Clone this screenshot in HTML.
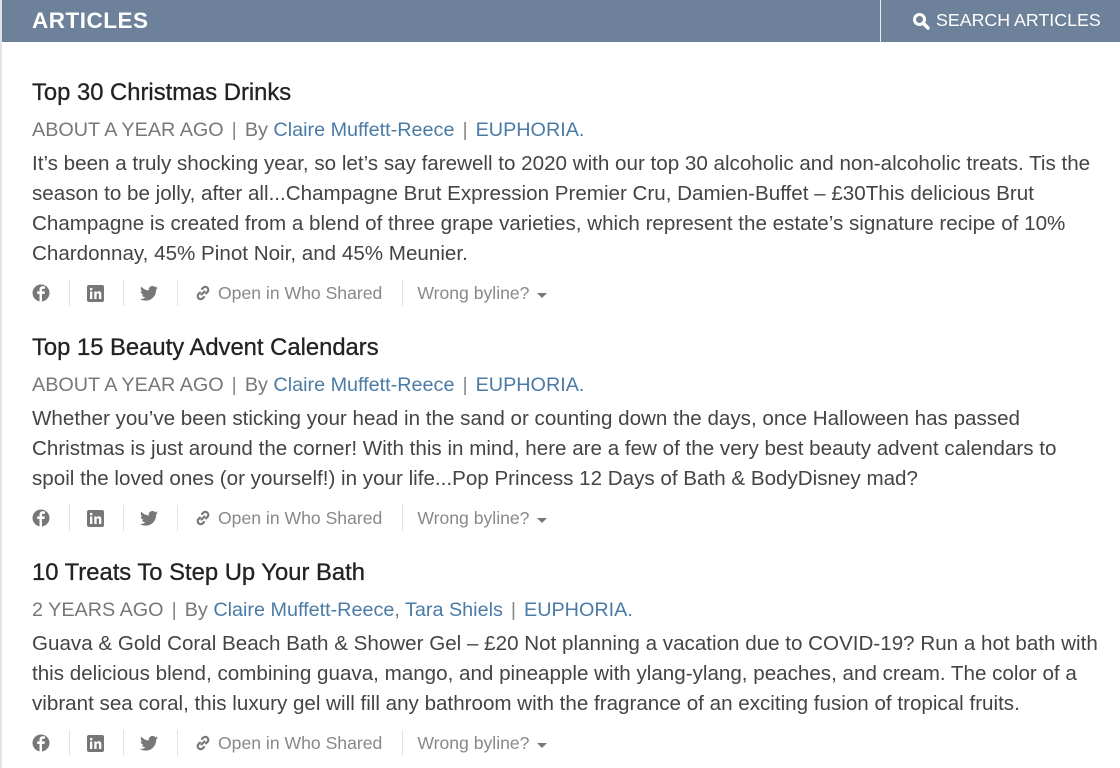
<!DOCTYPE html>
<html><head><meta charset="utf-8"><style>
*{margin:0;padding:0;box-sizing:border-box}
body{width:1120px;height:768px;overflow:hidden;background:#fff;font-family:"Liberation Sans",sans-serif;position:relative}
.lstrip{position:absolute;left:0;top:0;width:2px;height:768px;background:#e4e4e4}
.hdr{position:absolute;left:2px;top:0;width:1118px;height:42px;background:#6e819a}
.hdr .t{position:absolute;left:30px;top:8px;color:#fff;font-weight:bold;font-size:22.5px;letter-spacing:0.5px}
.hdr .sep{position:absolute;left:878px;top:0;width:1px;height:42px;background:#e8ecf1}
.hdr .s{position:absolute;left:910px;top:10px;color:#fff;font-size:17.8px;display:flex;align-items:center;gap:6px}
.a{position:absolute;left:32px;white-space:nowrap}
.title{font-size:23.8px;color:#222;height:30px;line-height:30px;-webkit-text-stroke:0.3px #222}
.meta{font-size:19.8px;color:#777;height:30px;line-height:30px;margin-top:7px}
.meta .c{color:#4a7ba6}
.meta .p{margin:0 8px;color:#888}
.body{font-size:20.6px;color:#444;line-height:30px;margin-top:4px}
.act{display:flex;align-items:center;height:30px;margin-top:9px;color:#888;font-size:17.6px}
.act .i{width:18px;display:flex;justify-content:center}
.act .d{width:1px;height:26px;background:#e2e2e2;margin:0 16px 0 19px}
.act .l{margin-left:20px;margin-right:14px}
</style></head><body>
<div class="lstrip"></div>
<div class="hdr"><div class="t">ARTICLES</div><div class="sep"></div>
<div class="s"><svg width="18" height="18" viewBox="0 0 18 18"><circle cx="7.5" cy="7.5" r="5" fill="none" stroke="#fff" stroke-width="3"/><path d="M11 11l5 5" stroke="#fff" stroke-width="3.5" stroke-linecap="round"/></svg>SEARCH ARTICLES</div></div>

<div class="a" style="top:78px">
<div class="title">Top 30 Christmas Drinks</div>
<div class="meta">ABOUT A YEAR AGO<span class="p">|</span>By <span class="c">Claire Muffett-Reece</span><span class="p">|</span><span class="c">EUPHORIA.</span></div>
<div class="body">It’s been a truly shocking year, so let’s say farewell to 2020 with our top 30 alcoholic and non-alcoholic treats. Tis the<br>season to be jolly, after all...Champagne Brut Expression Premier Cru, Damien-Buffet – £30This delicious Brut<br>Champagne is created from a blend of three grape varieties, which represent the estate’s signature recipe of 10%<br>Chardonnay, 45% Pinot Noir, and 45% Meunier.</div>
<div class="act"><span class="i"><svg width="18" height="18" viewBox="0 0 18 18"><circle cx="9" cy="9" r="8.5" fill="#777"/><path d="M10 18V10h2.5l.4-2.6H10V6c0-.8.3-1.3 1.4-1.3H13V2.4c-.4 0-1.2-.1-2.2-.1-2 0-3.3 1.2-3.3 3.4v1.7H5.2V10h2.3v8z" fill="#fff"/></svg></span><span class="d"></span><span class="i"><svg width="17" height="17" viewBox="0 0 17 17"><rect width="17" height="17" rx="2" fill="#777"/><rect x="3" y="6.5" width="2.3" height="7.5" fill="#fff"/><circle cx="4.2" cy="4" r="1.3" fill="#fff"/><path d="M7.3 6.5h2.2v1.1c.5-.8 1.4-1.3 2.4-1.3 1.8 0 2.4 1.1 2.4 3V14H12v-4.2c0-1-.3-1.6-1.1-1.6-.9 0-1.3.6-1.3 1.6V14H7.3z" fill="#fff"/></svg></span><span class="d"></span><span class="i"><svg width="18" height="15" viewBox="0 0 24 20"><path d="M24 2.4a10 10 0 0 1-2.8.8A5 5 0 0 0 23.3.4a10 10 0 0 1-3.1 1.2A4.9 4.9 0 0 0 11.8 6 14 14 0 0 1 1.7.9a4.9 4.9 0 0 0 1.5 6.6A4.9 4.9 0 0 1 1 6.9 4.9 4.9 0 0 0 4.9 11.8a5 5 0 0 1-2.2.1 4.9 4.9 0 0 0 4.6 3.4A9.9 9.9 0 0 1 0 17.3 14 14 0 0 0 7.5 19.5c9.1 0 14-7.5 14-14v-.6A10 10 0 0 0 24 2.4z" fill="#777"/></svg></span><span class="d"></span><svg width="18" height="18" viewBox="0 0 18 18" style="margin-right:6px"><path d="M7.5 10.5l3-3M8 5l1.5-1.5a3 3 0 0 1 4.2 4.2L12 9.4M10 13l-1.5 1.5a3 3 0 0 1-4.2-4.2L6 8.6" fill="none" stroke="#777" stroke-width="2.2" stroke-linecap="round"/></svg>Open in Who Shared<span class="d l"></span>Wrong byline?<span style="margin-left:8px;border-left:5px solid transparent;border-right:5px solid transparent;border-top:5px solid #777;margin-top:4px"></span></div>
</div>

<div class="a" style="top:333px">
<div class="title">Top 15 Beauty Advent Calendars</div>
<div class="meta">ABOUT A YEAR AGO<span class="p">|</span>By <span class="c">Claire Muffett-Reece</span><span class="p">|</span><span class="c">EUPHORIA.</span></div>
<div class="body">Whether you’ve been sticking your head in the sand or counting down the days, once Halloween has passed<br>Christmas is just around the corner! With this in mind, here are a few of the very best beauty advent calendars to<br>spoil the loved ones (or yourself!) in your life...Pop Princess 12 Days of Bath &amp; BodyDisney mad?</div>
<div class="act"><span class="i"><svg width="18" height="18" viewBox="0 0 18 18"><circle cx="9" cy="9" r="8.5" fill="#777"/><path d="M10 18V10h2.5l.4-2.6H10V6c0-.8.3-1.3 1.4-1.3H13V2.4c-.4 0-1.2-.1-2.2-.1-2 0-3.3 1.2-3.3 3.4v1.7H5.2V10h2.3v8z" fill="#fff"/></svg></span><span class="d"></span><span class="i"><svg width="17" height="17" viewBox="0 0 17 17"><rect width="17" height="17" rx="2" fill="#777"/><rect x="3" y="6.5" width="2.3" height="7.5" fill="#fff"/><circle cx="4.2" cy="4" r="1.3" fill="#fff"/><path d="M7.3 6.5h2.2v1.1c.5-.8 1.4-1.3 2.4-1.3 1.8 0 2.4 1.1 2.4 3V14H12v-4.2c0-1-.3-1.6-1.1-1.6-.9 0-1.3.6-1.3 1.6V14H7.3z" fill="#fff"/></svg></span><span class="d"></span><span class="i"><svg width="18" height="15" viewBox="0 0 24 20"><path d="M24 2.4a10 10 0 0 1-2.8.8A5 5 0 0 0 23.3.4a10 10 0 0 1-3.1 1.2A4.9 4.9 0 0 0 11.8 6 14 14 0 0 1 1.7.9a4.9 4.9 0 0 0 1.5 6.6A4.9 4.9 0 0 1 1 6.9 4.9 4.9 0 0 0 4.9 11.8a5 5 0 0 1-2.2.1 4.9 4.9 0 0 0 4.6 3.4A9.9 9.9 0 0 1 0 17.3 14 14 0 0 0 7.5 19.5c9.1 0 14-7.5 14-14v-.6A10 10 0 0 0 24 2.4z" fill="#777"/></svg></span><span class="d"></span><svg width="18" height="18" viewBox="0 0 18 18" style="margin-right:6px"><path d="M7.5 10.5l3-3M8 5l1.5-1.5a3 3 0 0 1 4.2 4.2L12 9.4M10 13l-1.5 1.5a3 3 0 0 1-4.2-4.2L6 8.6" fill="none" stroke="#777" stroke-width="2.2" stroke-linecap="round"/></svg>Open in Who Shared<span class="d l"></span>Wrong byline?<span style="margin-left:8px;border-left:5px solid transparent;border-right:5px solid transparent;border-top:5px solid #777;margin-top:4px"></span></div>
</div>

<div class="a" style="top:558px">
<div class="title">10 Treats To Step Up Your Bath</div>
<div class="meta">2 YEARS AGO<span class="p">|</span>By <span class="c">Claire Muffett-Reece</span>, <span class="c">Tara Shiels</span><span class="p">|</span><span class="c">EUPHORIA.</span></div>
<div class="body">Guava &amp; Gold Coral Beach Bath &amp; Shower Gel – £20 Not planning a vacation due to COVID-19? Run a hot bath with<br>this delicious blend, combining guava, mango, and pineapple with ylang-ylang, peaches, and cream. The color of a<br>vibrant sea coral, this luxury gel will fill any bathroom with the fragrance of an exciting fusion of tropical fruits.</div>
<div class="act"><span class="i"><svg width="18" height="18" viewBox="0 0 18 18"><circle cx="9" cy="9" r="8.5" fill="#777"/><path d="M10 18V10h2.5l.4-2.6H10V6c0-.8.3-1.3 1.4-1.3H13V2.4c-.4 0-1.2-.1-2.2-.1-2 0-3.3 1.2-3.3 3.4v1.7H5.2V10h2.3v8z" fill="#fff"/></svg></span><span class="d"></span><span class="i"><svg width="17" height="17" viewBox="0 0 17 17"><rect width="17" height="17" rx="2" fill="#777"/><rect x="3" y="6.5" width="2.3" height="7.5" fill="#fff"/><circle cx="4.2" cy="4" r="1.3" fill="#fff"/><path d="M7.3 6.5h2.2v1.1c.5-.8 1.4-1.3 2.4-1.3 1.8 0 2.4 1.1 2.4 3V14H12v-4.2c0-1-.3-1.6-1.1-1.6-.9 0-1.3.6-1.3 1.6V14H7.3z" fill="#fff"/></svg></span><span class="d"></span><span class="i"><svg width="18" height="15" viewBox="0 0 24 20"><path d="M24 2.4a10 10 0 0 1-2.8.8A5 5 0 0 0 23.3.4a10 10 0 0 1-3.1 1.2A4.9 4.9 0 0 0 11.8 6 14 14 0 0 1 1.7.9a4.9 4.9 0 0 0 1.5 6.6A4.9 4.9 0 0 1 1 6.9 4.9 4.9 0 0 0 4.9 11.8a5 5 0 0 1-2.2.1 4.9 4.9 0 0 0 4.6 3.4A9.9 9.9 0 0 1 0 17.3 14 14 0 0 0 7.5 19.5c9.1 0 14-7.5 14-14v-.6A10 10 0 0 0 24 2.4z" fill="#777"/></svg></span><span class="d"></span><svg width="18" height="18" viewBox="0 0 18 18" style="margin-right:6px"><path d="M7.5 10.5l3-3M8 5l1.5-1.5a3 3 0 0 1 4.2 4.2L12 9.4M10 13l-1.5 1.5a3 3 0 0 1-4.2-4.2L6 8.6" fill="none" stroke="#777" stroke-width="2.2" stroke-linecap="round"/></svg>Open in Who Shared<span class="d l"></span>Wrong byline?<span style="margin-left:8px;border-left:5px solid transparent;border-right:5px solid transparent;border-top:5px solid #777;margin-top:4px"></span></div>
</div>
</body></html>
